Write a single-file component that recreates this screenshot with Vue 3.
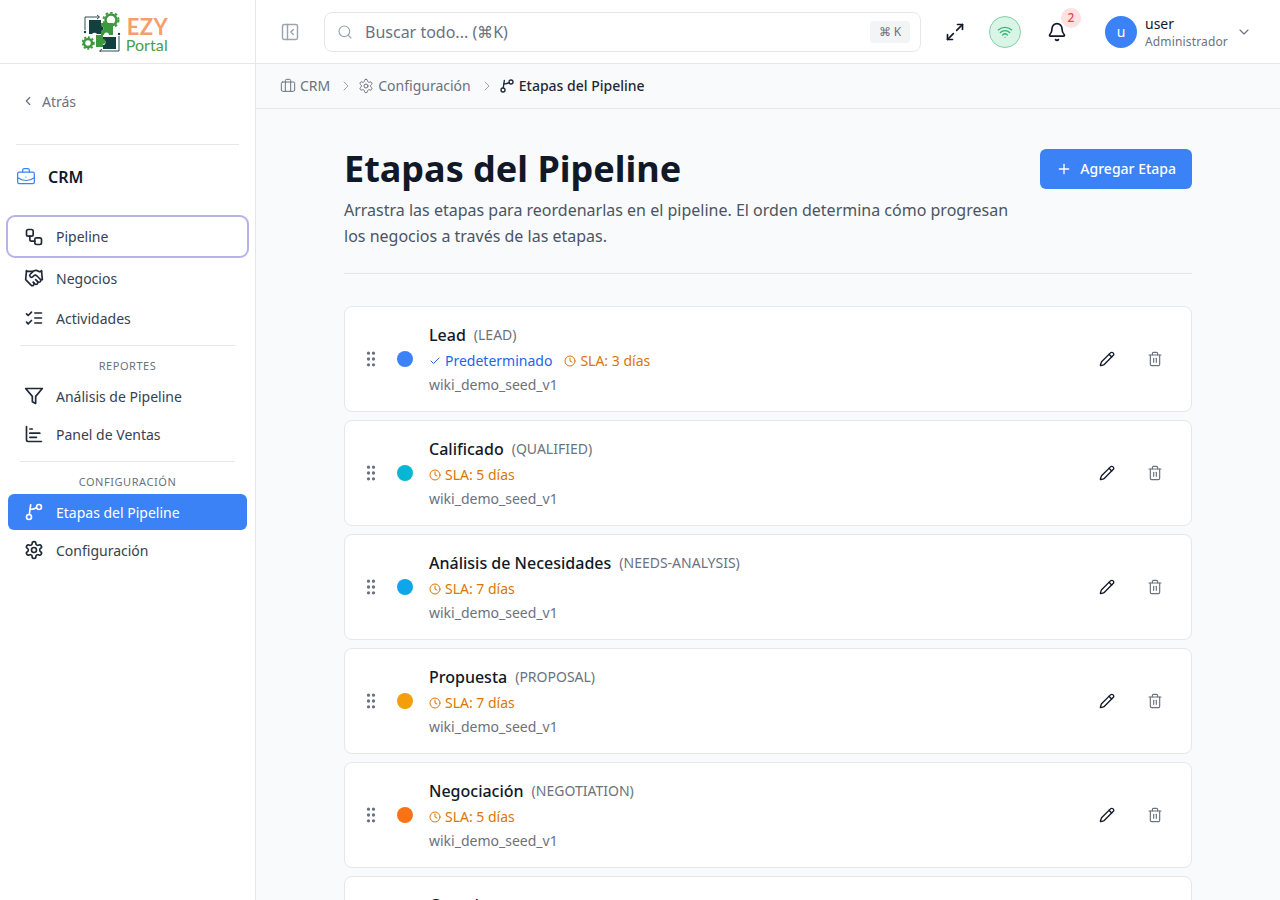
<script setup>
const icons = {
  panel: '<rect x="3" y="3" width="18" height="18" rx="2"/><path d="M9 3v18"/><path d="m16 15-3-3 3-3"/>',
  search: '<circle cx="11" cy="11" r="8"/><path d="m21 21-4.3-4.3"/>',
  maximize: '<path d="M15 3h6v6"/><path d="M9 21H3v-6"/><path d="M21 3l-7 7"/><path d="M3 21l7-7"/>',
  wifi: '<path d="M12 20h.01"/><path d="M2 8.82a15 15 0 0 1 20 0"/><path d="M5 12.859a10 10 0 0 1 14 0"/><path d="M8.5 16.429a5 5 0 0 1 7 0"/>',
  bell: '<path d="M10.268 21a2 2 0 0 0 3.464 0"/><path d="M3.262 15.326A1 1 0 0 0 4 17h16a1 1 0 0 0 .74-1.673C19.41 13.956 18 12.499 18 8A6 6 0 0 0 6 8c0 4.499-1.411 5.956-2.738 7.326"/>',
  chevronDown: '<path d="m6 9 6 6 6-6"/>',
  chevronRight: '<path d="m9 18 6-6-6-6"/>',
  chevronLeft: '<path d="m15 18-6-6 6-6"/>',
  briefcase: '<path d="M16 20V4a2 2 0 0 0-2-2h-4a2 2 0 0 0-2 2v16"/><rect x="2" y="6" width="20" height="14" rx="2"/>',
  business: '<path d="M12 12h.01"/><path d="M16 6V4a2 2 0 0 0-2-2h-4a2 2 0 0 0-2 2v2"/><path d="M22 13a18.15 18.15 0 0 1-20 0"/><rect x="2" y="6" width="20" height="14" rx="2"/>',
  settings: '<path d="M12.22 2h-.44a2 2 0 0 0-2 2v.18a2 2 0 0 1-1 1.73l-.43.25a2 2 0 0 1-2 0l-.15-.08a2 2 0 0 0-2.73.73l-.22.38a2 2 0 0 0 .73 2.73l.15.1a2 2 0 0 1 1 1.72v.51a2 2 0 0 1-1 1.74l-.15.09a2 2 0 0 0-.73 2.73l.22.38a2 2 0 0 0 2.73.73l.15-.08a2 2 0 0 1 2 0l.43.25a2 2 0 0 1 1 1.73V20a2 2 0 0 0 2 2h.44a2 2 0 0 0 2-2v-.18a2 2 0 0 1 1-1.73l.43-.25a2 2 0 0 1 2 0l.15.08a2 2 0 0 0 2.73-.73l.22-.39a2 2 0 0 0-.73-2.73l-.15-.08a2 2 0 0 1-1-1.74v-.5a2 2 0 0 1 1-1.74l.15-.09a2 2 0 0 0 .73-2.73l-.22-.38a2 2 0 0 0-2.73-.73l-.15.08a2 2 0 0 1-2 0l-.43-.25a2 2 0 0 1-1-1.73V4a2 2 0 0 0-2-2z"/><circle cx="12" cy="12" r="3"/>',
  stages: '<circle cx="18" cy="6" r="3"/><circle cx="6" cy="18" r="3"/><path d="M6.400 15 8 3.500"/><path d="M7.400 8.600c2.600.4 5-.2 7.700-1.600"/>',
  workflow: '<rect x="3" y="3" width="8" height="8" rx="2"/><path d="M7 11v4a2 2 0 0 0 2 2h4"/><rect x="13" y="13" width="8" height="8" rx="2"/>',
  handshake: '<path d="m11 17 2 2a1 1 0 1 0 3-3"/><path d="m14 14 2.500 2.500a1 1 0 1 0 3-3l-3.880-3.880a3 3 0 0 0-4.240 0l-.88.88a1 1 0 1 1-3-3l2.810-2.810a5.790 5.790 0 0 1 7.060-.87l.47.28a2 2 0 0 0 1.420.25L21 4"/><path d="m21 3 1 11h-2"/><path d="M3 3 2 14l6.500 6.500a1 1 0 1 0 3-3"/><path d="M3 4h8"/>',
  checks: '<path d="m3 17 2 2 4-4"/><path d="m3 7 2 2 4-4"/><path d="M13 6h8"/><path d="M13 12h8"/><path d="M13 18h8"/>',
  funnel: '<polygon points="22 3 2 3 10 12.460 10 19 14 21 14 12.460 22 3"/>',
  chart: '<path d="M3 3v16a2 2 0 0 0 2 2h16"/><path d="M7 16h8"/><path d="M7 11h12"/><path d="M7 6h3"/>',
  plus: '<path d="M5 12h14"/><path d="M12 5v14"/>',
  check: '<path d="M20 6 9 17l-5-5"/>',
  clock: '<circle cx="12" cy="12" r="10"/><polyline points="12 6 12 12 16 14"/>',
  grip: '<circle cx="9" cy="12" r="1"/><circle cx="9" cy="5" r="1"/><circle cx="9" cy="19" r="1"/><circle cx="15" cy="12" r="1"/><circle cx="15" cy="5" r="1"/><circle cx="15" cy="19" r="1"/>',
  pencil: '<path d="M21.174 6.812a1 1 0 0 0-3.986-3.987L3.842 16.174a2 2 0 0 0-.5.83l-1.321 4.352a.5.5 0 0 0 .623.622l4.353-1.32a2 2 0 0 0 .83-.497z"/><path d="m15 5 4 4"/>',
  trash: '<path d="M3 6h18"/><path d="M19 6v14c0 1-1 2-2 2H7c-1 0-2-1-2-2V6"/><path d="M8 6V4c0-1 1-2 2-2h4c1 0 2 1 2 2v2"/><line x1="10" y1="11" x2="10" y2="17"/><line x1="14" y1="11" x2="14" y2="17"/>',
};

const stages = [
  { name: "Lead", code: "LEAD", color: "#3b82f6", sla: 3, isDefault: true },
  { name: "Calificado", code: "QUALIFIED", color: "#06b6d4", sla: 5 },
  { name: "Análisis de Necesidades", code: "NEEDS-ANALYSIS", color: "#0ea5e9", sla: 7 },
  { name: "Propuesta", code: "PROPOSAL", color: "#f59e0b", sla: 7 },
  { name: "Negociación", code: "NEGOTIATION", color: "#f97316", sla: 5 },
  { name: "Ganado", code: "WON", color: "#22c55e", sla: 1 },
];
</script>

<template>
  <div class="app">
    <aside class="sidebar">
      <div class="logo">
        <svg class="logo-mark" viewBox="0 0 40 40" width="40" height="40">
          <g fill="none" stroke="#2f4f4f" stroke-width="1">
            <path d="M3 18V5h14" />
            <path d="M37 24v15H18" />
            <path d="m15 3 2.500 2L15 7" />
            <path d="m20 37-2.500 2 2.500 2" />
          </g>
          <path d="M7 8h12v6a2.500 2.500 0 0 1 0 5v3h-4a3 3 0 0 0-5 0H7z" fill="#12403f" />
          <path d="M19 11h12v12h-4a2.500 2.500 0 0 0-5 0h-3v-4a2.500 2.500 0 0 0 0-5z" fill="#3c9a3e" />
          <path d="M21 25h13v12H21v-4a2.500 2.500 0 0 0 0-5z" fill="#12403f" />
          <path d="M14 23h7v4a2.500 2.500 0 0 1 0 5v3h-7z" fill="#3c9a3e" />
          <circle cx="29" cy="8" r="5.500" fill="none" stroke="#3c9a3e" stroke-width="2.500" />
          <circle cx="29" cy="8" r="7.500" fill="none" stroke="#3c9a3e" stroke-width="2" stroke-dasharray="2.500 2.400" />
          <circle cx="6" cy="31" r="4" fill="none" stroke="#3c9a3e" stroke-width="2.500" />
          <circle cx="6" cy="31" r="5.800" fill="none" stroke="#3c9a3e" stroke-width="1.800" stroke-dasharray="2 1.800" />
          <circle cx="3" cy="20" r="1.200" fill="#12403f" />
          <circle cx="37" cy="22" r="1.200" fill="#12403f" />
        </svg>
        <div class="logo-text">
          <span class="logo-ezy">EZY</span>
          <span class="logo-portal">Portal</span>
        </div>
      </div>

      <div class="back">
        <svg class="ic ic-14" viewBox="0 0 24 24" v-html="icons.chevronLeft"></svg>
        <span>Atrás</span>
      </div>
      <div class="side-rule"></div>
      <div class="module">
        <svg class="ic ic-20 module-icon" viewBox="0 0 24 24" v-html="icons.business"></svg>
        <span>CRM</span>
      </div>

      <nav class="nav">
        <a class="item tall focused"><svg class="ic ic-20" viewBox="0 0 24 24" v-html="icons.workflow"></svg>Pipeline</a>
        <a class="item tall after-focus"><svg class="ic ic-20" viewBox="0 0 24 24" v-html="icons.handshake"></svg>Negocios</a>
        <a class="item tall"><svg class="ic ic-20" viewBox="0 0 24 24" v-html="icons.checks"></svg>Actividades</a>
        <div class="nav-rule first"></div>
        <div class="nav-label first">REPORTES</div>
        <a class="item"><svg class="ic ic-20" viewBox="0 0 24 24" v-html="icons.funnel"></svg>Análisis de Pipeline</a>
        <a class="item"><svg class="ic ic-20" viewBox="0 0 24 24" v-html="icons.chart"></svg>Panel de Ventas</a>
        <div class="nav-rule"></div>
        <div class="nav-label">CONFIGURACIÓN</div>
        <a class="item active"><svg class="ic ic-20" viewBox="0 0 24 24" v-html="icons.stages"></svg>Etapas del Pipeline</a>
        <a class="item"><svg class="ic ic-20" viewBox="0 0 24 24" v-html="icons.settings"></svg>Configuración</a>
      </nav>
    </aside>

    <div class="body">
      <header class="topbar">
        <svg class="ic ic-20 toggle" viewBox="0 0 24 24" v-html="icons.panel"></svg>
        <div class="search">
          <svg class="ic ic-16" viewBox="0 0 24 24" v-html="icons.search"></svg>
          <span class="search-text">Buscar todo... (⌘K)</span>
          <span class="kbd">⌘ K</span>
        </div>
        <svg class="ic ic-20 expand" viewBox="0 0 24 24" v-html="icons.maximize"></svg>
        <div class="status">
          <svg class="ic ic-16" viewBox="0 0 24 24" v-html="icons.wifi"></svg>
        </div>
        <div class="bell">
          <svg class="ic ic-20" viewBox="0 0 24 24" v-html="icons.bell"></svg>
          <span class="badge">2</span>
        </div>
        <div class="avatar">u</div>
        <div class="who">
          <span class="who-name">user</span>
          <span class="who-role">Administrador</span>
        </div>
        <svg class="ic ic-16 who-chevron" viewBox="0 0 24 24" v-html="icons.chevronDown"></svg>
      </header>

      <div class="crumbs">
        <svg class="ic ic-16" viewBox="0 0 24 24" v-html="icons.briefcase"></svg>
        <span class="crumb">CRM</span>
        <svg class="ic ic-16 sep" viewBox="0 0 24 24" v-html="icons.chevronRight"></svg>
        <svg class="ic ic-16" viewBox="0 0 24 24" v-html="icons.settings"></svg>
        <span class="crumb">Configuración</span>
        <svg class="ic ic-16 sep" viewBox="0 0 24 24" v-html="icons.chevronRight"></svg>
        <svg class="ic ic-16 current" viewBox="0 0 24 24" v-html="icons.stages"></svg>
        <span class="crumb current">Etapas del Pipeline</span>
      </div>

      <main class="main">
        <div class="page-head">
          <div>
            <h1>Etapas del Pipeline</h1>
            <p>Arrastra las etapas para reordenarlas en el pipeline. El orden determina cómo progresan los negocios a través de las etapas.</p>
          </div>
          <button class="add">
            <svg class="ic ic-16" viewBox="0 0 24 24" v-html="icons.plus"></svg>
            Agregar Etapa
          </button>
        </div>

        <div class="list">
          <div v-for="stage in stages" :key="stage.code" class="card">
            <svg class="ic ic-20 grip" viewBox="0 0 24 24" v-html="icons.grip"></svg>
            <span class="dot" :style="{ background: stage.color }"></span>
            <div class="info">
              <div class="title-row">
                <span class="name">{{ stage.name }}</span>
                <span class="code">({{ stage.code }})</span>
              </div>
              <div class="meta">
                <span v-if="stage.isDefault" class="default">
                  <svg class="ic ic-12" viewBox="0 0 24 24" v-html="icons.check"></svg>
                  Predeterminado
                </span>
                <span class="sla">
                  <svg class="ic ic-12" viewBox="0 0 24 24" v-html="icons.clock"></svg>
                  SLA: {{ stage.sla }} días
                </span>
              </div>
              <div class="source">wiki_demo_seed_v1</div>
            </div>
            <svg class="ic ic-16 edit" viewBox="0 0 24 24" v-html="icons.pencil"></svg>
            <svg class="ic ic-16 remove" viewBox="0 0 24 24" v-html="icons.trash"></svg>
          </div>
        </div>
      </main>
    </div>
  </div>
</template>

<style>
html, body {
  margin: 0;
  background: #f9fafb;
}
</style>

<style scoped>
.app {
  display: flex;
  height: 900px;
  overflow: hidden;
  font-family: "Noto Sans", "Open Sans", sans-serif;
  color: #374151;
  font-size: 14px;
}

.ic {
  flex: none;
  fill: none;
  stroke: currentColor;
  stroke-width: 2;
  stroke-linecap: round;
  stroke-linejoin: round;
}
.ic-12 { width: 12px; height: 12px; }
.ic-14 { width: 14px; height: 14px; }
.ic-16 { width: 16px; height: 16px; }
.ic-20 { width: 20px; height: 20px; }

.sidebar {
  flex: none;
  width: 255px;
  background: #fff;
  border-right: 1px solid #e5e7eb;
}

.logo {
  height: 63px;
  border-bottom: 1px solid #e5e7eb;
  display: flex;
  align-items: center;
  justify-content: center;
  gap: 5px;
  padding-right: 5px;
}
.logo-text {
  display: flex;
  flex-direction: column;
  font-family: Lato, sans-serif;
  padding-top: 6px;
}
.logo-ezy {
  font-size: 22px;
  line-height: 19px;
  font-weight: 700;
  color: #f4a06e;
  letter-spacing: 0.5px;
}
.logo-portal {
  font-size: 16px;
  line-height: 17px;
  letter-spacing: 0.1px;
  margin-left: -1px;
  color: #4a9d50;
}

.back {
  display: flex;
  align-items: center;
  gap: 7px;
  margin-top: 27px;
  padding-left: 21px;
  height: 20px;
  color: #6b7280;
}

.side-rule {
  height: 1px;
  margin: 33px 16px 0;
  background: #e5e7eb;
}

.module {
  display: flex;
  align-items: center;
  gap: 12px;
  height: 24px;
  margin-top: 20px;
  padding-left: 16px;
  font-size: 16px;
  font-weight: 600;
  color: #111827;
}
.module-icon {
  color: #3b82f6;
  stroke-width: 1.5;
}

.nav {
  margin-top: 28px;
  padding: 0 8px;
}
.item {
  display: flex;
  align-items: center;
  gap: 12px;
  height: 36px;
  margin-top: 2px;
  padding-left: 16px;
  border-radius: 6px;
  color: #374151;
}
.item .ic { color: #1f2937; }
.item.tall { height: 38px; }
.item.focused {
  height: 39px;
  margin-top: 0;
  outline: 2px solid #b5b3e8;
  border-radius: 7px;
}
.item.after-focus { margin-top: 3px; }
.item.active {
  background: #3b82f6;
  color: #fff;
}
.item.active .ic { color: #fff; }

.nav-rule {
  height: 1px;
  margin: 9px 12px 0;
  background: #e5e7eb;
}
.nav-rule.first { margin-top: 8px; }
.nav-label {
  margin-top: 12px;
  height: 16px;
  margin-bottom: 4px;
  line-height: 16px;
  text-align: center;
  font-size: 11px;
  letter-spacing: 0.55px;
  color: #6b7280;
}

.body {
  flex: 1;
  min-width: 0;
  display: flex;
  flex-direction: column;
}

.topbar {
  flex: none;
  height: 63px;
  background: #fff;
  border-bottom: 1px solid #e5e7eb;
  display: flex;
  align-items: center;
  padding-left: 24px;
}
.toggle { color: #9ca3af; stroke-width: 1.75; margin-right: 24px; }

.search {
  width: 597px;
  height: 40px;
  box-sizing: border-box;
  border: 1px solid #e5e7eb;
  border-radius: 8px;
  display: flex;
  align-items: center;
  padding: 0 10px 0 12px;
  color: #6b7280;
}
.search .ic { color: #9ca3af; stroke-width: 1.75; }
.search-text {
  flex: 1;
  margin-left: 12px;
  font-size: 16px;
  color: #6b7280;
}
.kbd {
  width: 40px;
  height: 22px;
  border-radius: 4px;
  background: #f3f4f6;
  font-size: 12px;
  line-height: 22px;
  text-align: center;
  color: #6b7280;
}

.expand { color: #111827; margin-left: 24px; }
.status {
  width: 32px;
  height: 32px;
  box-sizing: border-box;
  margin-left: 24px;
  border-radius: 50%;
  background: #d9f5e6;
  border: 1px solid #86cfa8;
  color: #34b27b;
  display: flex;
  align-items: center;
  justify-content: center;
}
.bell {
  position: relative;
  margin-left: 26px;
  height: 20px;
  color: #111827;
}
.badge {
  position: absolute;
  top: -14px;
  left: 14px;
  width: 20px;
  height: 20px;
  border-radius: 50%;
  background: #fee2e2;
  color: #ef4444;
  font-size: 12px;
  font-weight: 500;
  line-height: 20px;
  text-align: center;
}
.avatar {
  width: 32px;
  height: 32px;
  margin-left: 38px;
  border-radius: 50%;
  background: #3b82f6;
  color: #fff;
  font-size: 14px;
  line-height: 32px;
  text-align: center;
}
.who {
  display: flex;
  flex-direction: column;
  margin-left: 8px;
  padding-top: 2px;
}
.who-name { font-size: 14px; line-height: 18px; color: #111827; }
.who-role { font-size: 12px; line-height: 18px; letter-spacing: 0.15px; color: #6b7280; }
.who-chevron { color: #6b7280; margin-left: 8px; stroke-width: 1.75; }

.crumbs {
  flex: none;
  height: 45px;
  box-sizing: border-box;
  border-bottom: 1px solid #e5e7eb;
  background: #f9fafb;
  display: flex;
  align-items: center;
  padding: 0 0 1px 24px;
  color: #6b7280;
}
.crumbs .ic { stroke-width: 1.5; }
.crumb { margin-left: 4px; }
.crumb.current, .ic.current { color: #1f2937; }
.crumb.current { font-weight: 500; }
.crumbs .ic.current { stroke-width: 2; }
.sep { margin: 0 4px 0 8px; color: #9ca3af; }

.main {
  flex: 1;
  min-height: 0;
  overflow: hidden;
  padding: 40px 88px 0;
  background: #f9fafb;
}

.page-head {
  display: flex;
  justify-content: space-between;
  align-items: flex-start;
  padding-bottom: 24px;
  border-bottom: 1px solid #e5e7eb;
  margin-bottom: 32px;
}
.page-head h1 {
  margin: 0;
  font-size: 36px;
  line-height: 40px;
  font-weight: 700;
  color: #111827;
}
.page-head p {
  margin: 8px 0 0;
  max-width: 672px;
  font-size: 16px;
  line-height: 26px;
  color: #4b5563;
}
.add {
  display: flex;
  align-items: center;
  gap: 8px;
  height: 40px;
  padding: 0 16px 1px;
  border: 0;
  border-radius: 6px;
  background: #3b82f6;
  color: #fff;
  font-family: inherit;
  font-size: 14px;
  font-weight: 500;
}

.list {
  display: flex;
  flex-direction: column;
  gap: 8px;
}
.card {
  flex: none;
  height: 106px;
  box-sizing: border-box;
  display: flex;
  align-items: center;
  padding: 0 28px 0 16px;
  background: #fff;
  border: 1px solid #e5e7eb;
  border-radius: 8px;
}
.grip { color: #6b7280; }
.dot {
  flex: none;
  width: 16px;
  height: 16px;
  margin-left: 16px;
  border-radius: 50%;
}
.info {
  flex: 1;
  margin-left: 16px;
}
.title-row {
  display: flex;
  align-items: center;
  gap: 8px;
  height: 24px;
}
.name {
  font-size: 16px;
  font-weight: 500;
  color: #111827;
}
.code { font-size: 14px; color: #6b7280; margin-bottom: 2px; }
.meta {
  display: flex;
  gap: 12px;
  height: 20px;
  margin-top: 4px;
  line-height: 20px;
}
.default, .sla {
  display: flex;
  align-items: center;
  gap: 4px;
}
.default { color: #2563eb; }
.sla { color: #d97706; }
.source {
  margin-top: 4px;
  height: 20px;
  line-height: 20px;
  color: #6b7280;
}
.edit { color: #111827; }
.remove { color: #6b7280; margin-left: 32px; stroke-width: 1.75; }
</style>
